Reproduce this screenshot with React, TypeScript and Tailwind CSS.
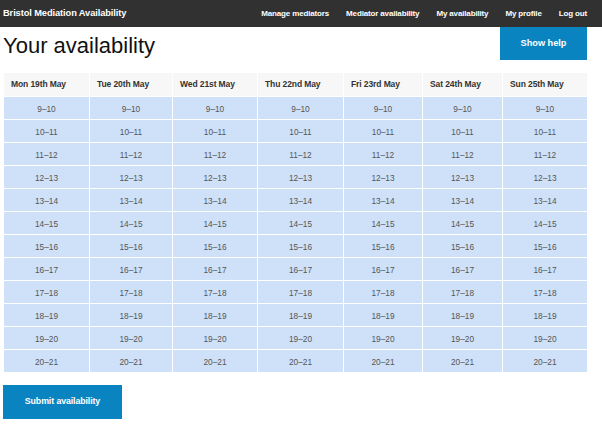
const days = [
  { label: 'Mon 19th May', w: 'w-[86px]' },
  { label: 'Tue 20th May', w: 'w-[83px]' },
  { label: 'Wed 21st May', w: 'w-[85px]' },
  { label: 'Thu 22nd May', w: 'w-[86px]' },
  { label: 'Fri 23rd May', w: 'w-[79px]' },
  { label: 'Sat 24th May', w: 'w-[80px]' },
  { label: 'Sun 25th May', w: 'w-[85px]' },
];

const slots = [9, 10, 11, 12, 13, 14, 15, 16, 17, 18, 19, 20].map((h) => `${h}–${h + 1}`);

const navLinks = ['Manage mediators', 'Mediator availability', 'My availability', 'My profile', 'Log out'];

export default function App() {
  return (
    <div className="min-h-[440px] bg-white text-[#222] font-['Liberation_Sans',Arial,sans-serif]">
      <nav className="h-[27px] bg-[#313131] flex items-center justify-between pl-[3px] pr-[15px]">
        <span className="text-white font-bold text-[9.3px] tracking-[-0.1px]">Bristol Mediation Availability</span>
        <div className="flex items-center gap-[17px]">
          {navLinks.map((l) => (
            <a key={l} href="#" className="text-white font-bold text-[8px] tracking-[-0.15px]">
              {l}
            </a>
          ))}
        </div>
      </nav>

      <div className="pl-[3px] pr-[15px]">
        <div className="flex items-center justify-between h-[33px]">
          <h1 className="text-[22px] leading-none text-[#111] pt-[5px]">Your availability</h1>
          <button className="w-[87px] h-[33px] bg-[#0a84c1] text-white font-bold text-[9.2px]">Show help</button>
        </div>

        <table className="mt-[12px] w-[584px] border-collapse border border-dashed border-[#bcd4ea] table-fixed">
          <thead>
            <tr className="h-[24px] bg-[#f6f7f6]">
              {days.map((d) => (
                <th
                  key={d.label}
                  className={`${d.w} border border-white text-left pl-[7px] font-bold text-[8.5px] text-[#333] tracking-[-0.1px]`}
                >
                  {d.label}
                </th>
              ))}
            </tr>
          </thead>
          <tbody>
            {slots.map((s) => (
              <tr key={s} className="h-[23px] bg-[#cfe1f9]">
                {days.map((d) => (
                  <td key={d.label} className="border-[1.5px] border-white text-center text-[8.3px] text-[#555] pt-[2px]">
                    {s}
                  </td>
                ))}
              </tr>
            ))}
          </tbody>
        </table>

        <button className="mt-[12px] w-[119px] h-[34px] bg-[#0a84c1] text-white font-bold text-[8.8px] tracking-[-0.1px]">
          Submit availability
        </button>
      </div>
    </div>
  );
}
